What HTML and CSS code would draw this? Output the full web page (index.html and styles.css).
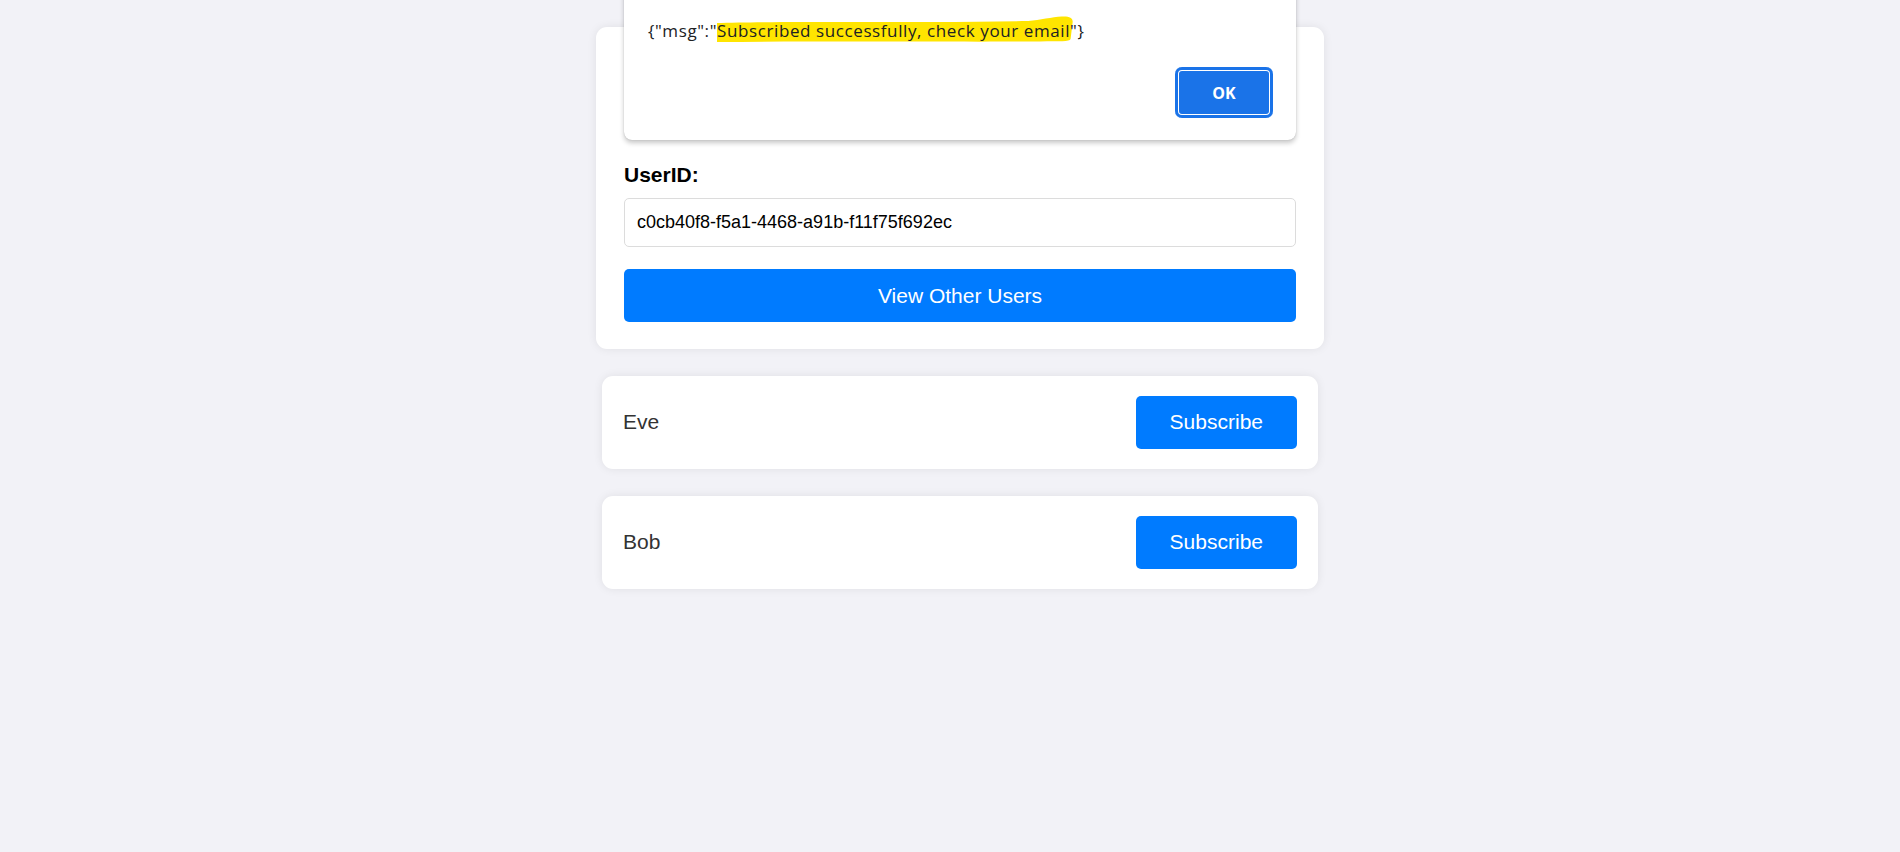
FILE: index.html
```html
<!DOCTYPE html>
<html lang="en">
<head>
<meta charset="utf-8">
<title>Users</title>
<link rel="stylesheet" href="styles.css">
</head>
<body>
<div class="page">
  <div class="container">
    <section class="card main-card">
      <div class="card-top"></div>
      <label class="field-label" for="uid">UserID:</label>
      <input class="field-input" id="uid" type="text" value="c0cb40f8-f5a1-4468-a91b-f11f75f692ec" readonly>
      <button class="btn btn-wide" type="button">View Other Users</button>
    </section>
    <ul class="user-list">
      <li class="user-item">
        <span class="user-name">Eve</span>
        <button class="btn btn-sub" type="button">Subscribe</button>
      </li>
      <li class="user-item">
        <span class="user-name">Bob</span>
        <button class="btn btn-sub" type="button">Subscribe</button>
      </li>
    </ul>
  </div>
</div>

<div class="alert" role="alertdialog">
  <p class="alert-msg">{"msg":"<span class="hl"><svg class="hl-mark" viewBox="0 0 368 30" preserveAspectRatio="none" aria-hidden="true"><path d="M1 8 C60 6 200 8 318 6 C330 5 342 2 352 1.5 C360 1 364 3 363 8 L361 24 C360 27 350 26 330 26.5 C250 27 120 26 1 27 Z" fill="#ffe500"/></svg>Subscribed successfully, check your email"</span>}</p>
  <div class="alert-actions">
    <button class="alert-ok" type="button">OK</button>
  </div>
</div>
</body>
</html>
```

FILE: styles.css
```css
* {
  box-sizing: border-box;
}

html, body {
  margin: 0;
  padding: 0;
}

body {
  background: #f2f2f7;
  font-family: "Liberation Sans", Arial, sans-serif;
  color: #333;
  min-height: 852px;
}

.page {
  padding: 27px 0 0 20px;
}

.container {
  width: 728px;
  margin: 0 auto;
}

.card {
  background: #fff;
  border-radius: 11px;
  box-shadow: 0 0 10px rgba(0, 0, 0, 0.08);
}

.main-card {
  padding: 27px 28px 27px 28px;
  display: flex;
  flex-direction: column;
}

.card-top {
  height: 109px;
}

.field-label {
  font-size: 21px;
  font-weight: bold;
  color: #000;
  line-height: 24px;
  margin-bottom: 11px;
}

.field-input {
  height: 49px;
  border: 1px solid #dcdcdc;
  border-radius: 5px;
  padding: 0 12px;
  font-family: "Liberation Sans", Arial, sans-serif;
  font-size: 18px;
  color: #000;
  background: #fff;
  outline: none;
  margin: 0 0 22px 0;
}

.btn {
  background: #007bff;
  color: #fff;
  border: none;
  border-radius: 5px;
  font-family: "Liberation Sans", Arial, sans-serif;
  font-size: 21px;
  cursor: pointer;
}

.btn-wide {
  height: 53px;
  width: 100%;
}

.user-list {
  list-style: none;
  margin: 0;
  padding: 0 6px;
}

.user-item {
  margin-top: 26.5px;
  background: #fff;
  border-radius: 11px;
  box-shadow: 0 0 10px rgba(0, 0, 0, 0.08);
  padding: 20px 21px 20.5px 21px;
  display: flex;
  align-items: center;
  justify-content: space-between;
}

.user-name {
  font-size: 21px;
  color: #333;
}

.btn-sub {
  height: 53px;
  padding: 0 34px;
}

/* native-looking alert overlay */
.alert {
  position: absolute;
  top: -40px;
  left: 624px;
  width: 672px;
  height: 180px;
  background: #fff;
  border-radius: 0 0 8px 8px;
  box-shadow: 0 3px 5px rgba(0, 0, 0, 0.22), 0 0 1px rgba(0, 0, 0, 0.25);
  padding: 59px 23px 22px 24px;
  display: flex;
  flex-direction: column;
  z-index: 10;
}

.alert-msg {
  margin: 0;
  font-family: "Open Sans", "Noto Sans", sans-serif;
  font-size: 17px;
  letter-spacing: 0.6px;
  line-height: 24px;
  color: #202124;
  white-space: nowrap;
}

.hl {
  position: relative;
}

.hl-mark {
  position: absolute;
  left: -1px;
  top: -4px;
  width: calc(100% + 1px);
  height: 30px;
  z-index: -1;
}

.alert-actions {
  margin-top: auto;
  display: flex;
  justify-content: flex-end;
}

.alert-ok {
  width: 98px;
  height: 51px;
  background: #1a73e8;
  color: #fff;
  border: none;
  border-radius: 7px;
  box-shadow: inset 0 0 0 3px #1a73e8, inset 0 0 0 4px #fff;
  font-family: "Open Sans", "Noto Sans", sans-serif;
  font-weight: bold;
  font-size: 16px;
}
```
